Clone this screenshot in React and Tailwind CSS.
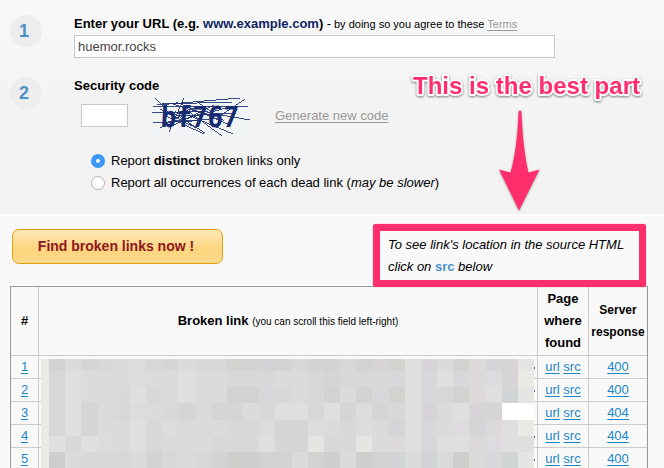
const palette = {
  a: '#cececd',
  b: '#d2d3d1',
  c: '#d2d3d4',
  d: '#d7d8d7',
  e: '#dbdbdb',
  g: '#dfdfe0',
  h: '#e5e5e4',
  i: '#eaeae7',
  u: '#d8d8da',
  v: '#d6d4d7',
  p: '#dbd9da',
  f: '#dddbde',
  w: '#ffffff',
};

const mosaic = [
  'ibevdpfuvedubbccdccucvbgvebpvvh',
  'idgeepfeegeeddueedvuddugugupfvi',
  'idgepdgupgeebbuuedbebubgudbpgch',
  'idgvpdfedvpvveuggugvfvugvegvvww',
  'idgvepgufppeudfvvfedfpvguefvpgi',
  'igdgfpgupeedddgvvhduhepguggpfgg',
  'iaeuduecdpdcaabbebaeabceceaeuch',
];
const rowHeights = ['h-[12px]', 'h-[16px]', 'h-[16px]', 'h-[17px]', 'h-[16px]', 'h-[16px]', 'h-[16px]'];

function Mosaic() {
  return (
    <div className="absolute left-[2px] top-[3px] w-[493px] overflow-hidden">
      {mosaic.map((row, r) => (
        <div key={r} className={`flex ${rowHeights[r]}`}>
          {row.split('').map((c, i) => (
            <div
              key={i}
              className={i === 0 ? 'w-[8px] shrink-0' : 'min-w-0 flex-1'}
              style={{ backgroundColor: palette[c] }}
            />
          ))}
        </div>
      ))}
    </div>
  );
}

function Captcha() {
  return (
    <svg className="h-[44px] w-[106px]" viewBox="0 0 106 44">
      <rect x="4" y="3" width="99" height="39" fill="#f2f4f6" />
      <g fontFamily="DejaVu Sans Mono" fontWeight="700" fill="#172c70">
        <text y="33" fontSize="29" textLength="78" lengthAdjust="spacingAndGlyphs" transform="translate(14 0) skewX(-3)">
          bf767
        </text>
      </g>
      <path
        d="M7 4L26 24 M9 11L92 4 M5 13L100 12 M4 19L60 17 M62 19L102 26 M5 29L50 26 M36 4L21 38 M28 8L82 31 M33 12L74 42 M16 21L56 40 M72 22L97 5 M22 29L78 14 M14 10L84 8 M25 10L62 22 M35 28L70 24 M12 34L49 12 M40 21L85 40 M48 7L76 27 M22 17L57 39 M27 17L47 34 M12 15L44 32 M30 22L88 19 M24 32L66 11"
        stroke="#172c70"
        strokeWidth=".85"
        fill="none"
        shapeRendering="crispEdges"
      />
    </svg>
  );
}

function StepNumber({ children }) {
  return (
    <div className="flex size-8 items-center justify-center rounded-full bg-[#ededed] pr-1 text-[18px] font-bold leading-none text-[#4b91c9]">
      {children}
    </div>
  );
}

const link = 'text-[#1c87c9] underline decoration-1 underline-offset-2';
const results = ['400', '400', '404', '404', '400'];

export default function App() {
  return (
    <div className="relative h-[468px] w-[664px] overflow-hidden bg-[#f9f9f9] font-['Liberation_Sans',Arial,sans-serif] text-[13px] text-black">
      <section className="flex h-[214px] bg-linear-to-b from-[#f9f9f9] via-[#f3f3f3] via-50% to-[#f2f2f2] pl-[10px] pt-[15px]">
        <div className="flex w-16 flex-col gap-[30px]">
          <StepNumber>1</StepNumber>
          <StepNumber>2</StepNumber>
        </div>
        <div className="w-[500px]">
          <div className="flex h-5 items-start whitespace-pre text-[13px] font-bold leading-[18px]">
            <span className="w-[257px]">
              Enter your URL (e.g. <span className="text-[#0e2561]">www.example.com</span>) <span className="font-normal">-</span>
            </span>
            <span className="pl-[3px] text-[11px] font-normal">
              by doing so you agree to these <span className="text-[#999] underline underline-offset-2">Terms</span>
            </span>
          </div>
          <div className="flex h-[23px] w-[481px] items-center border border-[#c8c8c8] bg-white pl-[3px] text-[13px] text-[#444]">
            huemor.rocks
          </div>
          <div className="mt-[19px] h-[17px] text-[13px] font-bold leading-[17px]">Security code</div>
          <div className="flex h-[44px] items-start">
            <div className="ml-[7px] mt-[10px] h-[23px] w-[47px] border border-[#c8c8c8] bg-white" />
            <div className="ml-[20px]">
              <Captcha />
            </div>
            <div className="ml-[21px] mt-[14px] text-[13px] leading-[16px] text-[#999] underline underline-offset-2">
              Generate new code
            </div>
          </div>
          <div className="ml-[17px] mt-[12px] flex h-[22px] items-center gap-[6px]">
            <span className="flex size-[14px] items-center justify-center rounded-full bg-[#3899fb]">
              <span className="size-1 rounded-full bg-white" />
            </span>
            <span>
              Report <b>distinct</b> broken links only
            </span>
          </div>
          <div className="ml-[17px] flex h-[22px] items-center gap-[6px]">
            <span className="size-[14px] rounded-full border border-[#b3b3b3] bg-white" />
            <span>
              Report all occurrences of each dead link (<i>may be slower</i>)
            </span>
          </div>
        </div>
      </section>

      <div className="h-[2px] bg-white" />

      <section className="flex h-[70px] items-start">
        <button className="ml-[12px] mt-[13px] h-[35px] w-[211px] rounded-[7px] border border-[#e3a011] bg-linear-to-b from-[#ffe7b5] via-[#fed47e] via-60% to-[#fed98c] pr-[3px] text-[14px] font-bold text-[#8d1820]">
          Find broken links now !
        </button>
        <div className="relative z-10 ml-[150px] mt-[8px] h-[63px] w-[273px] rounded-[3px] border-[7px] border-[#ff2f6d] bg-[#f9f9f9] pl-[8px] pt-[3px] text-[13px] italic leading-[22px] shadow-[0_0_1px_#ff2f6d]">
          To see link&apos;s location in the source HTML
          <br />
          click on <b className="not-italic text-[#4b91c9]">src</b> below
        </div>
      </section>

      <div className="ml-[10px] w-[638px] border border-[#999]">
        <div className="grid h-[69px] grid-cols-[28px_499px_51px_58px] border-b border-[#ccc] text-center font-bold leading-[22px]">
          <div className="flex items-center justify-center border-r border-[#ccc]">#</div>
          <div className="flex items-center justify-center border-r border-[#ccc]">
            <span>
              Broken link <span className="text-[10px] font-normal">(you can scroll this field left-right)</span>
            </span>
          </div>
          <div className="flex items-center justify-center border-r border-[#ccc] px-1">
            Page where found
          </div>
          <div className="flex items-center justify-center text-[12px]">
            Server response
          </div>
        </div>
        <div className="relative">
          {results.map((code, i) => (
            <div key={i} className="grid h-[23px] grid-cols-[28px_499px_51px_58px] border-b border-[#ccc] text-center text-[13px] leading-[22px]">
              <div className={`border-r border-[#ccc] ${link}`}>{i + 1}</div>
              <div className="flex items-center justify-end border-r border-[#ccc] pr-[2px]">
                {i !== 2 && <span className="mt-[1px] h-[2px] w-[2px] bg-[#416fd2]" />}
              </div>
              <div className="border-r border-[#ccc]">
                <span className={link}>url</span> <span className={link}>src</span>
              </div>
              <div>
                <span className={link}>{code}</span>
              </div>
            </div>
          ))}
          <div className="absolute left-[28px] top-0">
            <Mosaic />
          </div>
        </div>
      </div>

      <div className="absolute left-[413px] top-[72px] whitespace-nowrap">
        <svg className="h-[146px] w-[236px] overflow-visible" viewBox="0 0 236 146">
          <g className="drop-shadow-[0_1px_1px_rgba(0,0,0,0.5)]">
            <text
              x="0"
              y="22"
              textLength="227"
              lengthAdjust="spacingAndGlyphs"
              fontFamily="Liberation Sans"
              fontSize="24"
              fontWeight="700"
              fill="#ff2f6d"
              stroke="#fff"
              strokeWidth="4"
              strokeLinejoin="round"
              paintOrder="stroke"
            >
              This is the best part
            </text>
          </g>
          <path
            className="drop-shadow-[0_1px_1px_rgba(0,0,0,0.35)]"
            d="M105 41Q105 39 106.500 39Q108 39 108 41C109 65 111 83 115 101L126 98L105.500 139L85.500 98L97 101C102 83 104 65 105 41Z"
            transform="translate(.5 -.5)"
            fill="#ff2f6d"
          />
        </svg>
      </div>
    </div>
  );
}
